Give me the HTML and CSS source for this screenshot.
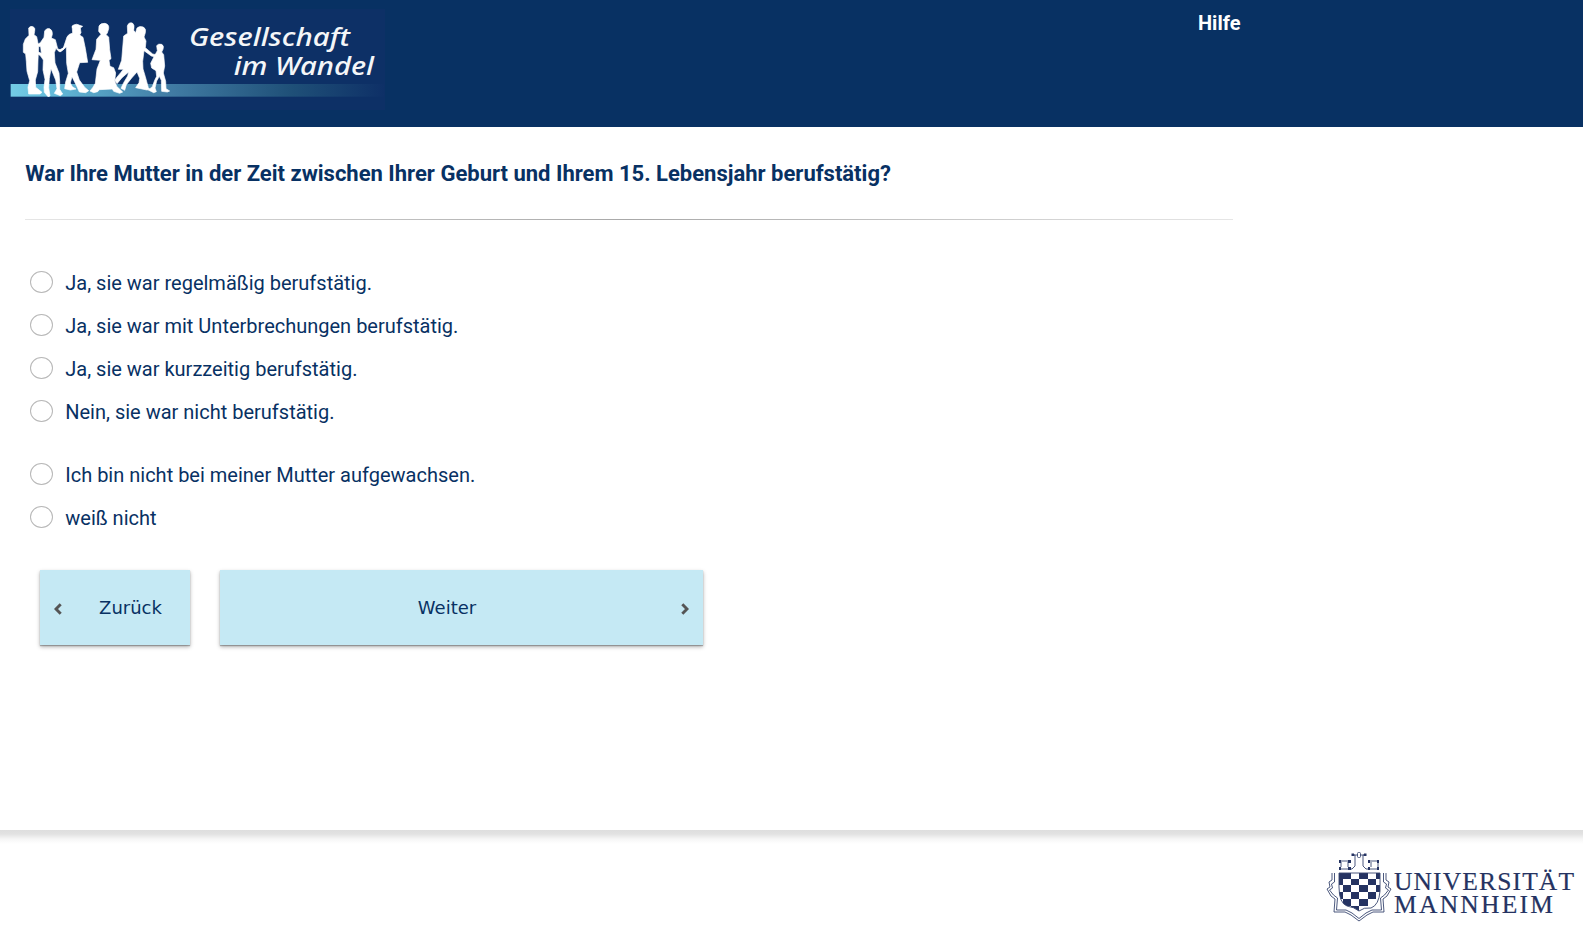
FILE: index.html
```html
<!DOCTYPE html>
<html lang="de">
<head>
<meta charset="utf-8">
<title>Gesellschaft im Wandel</title>
<link rel="stylesheet" href="styles.css">
</head>
<body>
<header class="header">
  <svg class="brand" viewBox="0 0 1200 381" role="img" aria-label="Gesellschaft im Wandel">
    <defs>
      <linearGradient id="band" x1="0" x2="1">
        <stop offset="0" stop-color="#74cce6"/>
        <stop offset=".12" stop-color="#62b8d8"/>
        <stop offset=".42" stop-color="#427da5"/>
        <stop offset=".75" stop-color="#1f5078"/>
        <stop offset="1" stop-color="#0e3067"/>
      </linearGradient>
    </defs>
    <rect x="30" y="27" width="1125" height="303" fill="#0d3066"/>
    <rect x="32" y="252" width="1120" height="38" fill="url(#band)"/>
    <g class="figures">
      <path d="M86 84Q91 77 99 80Q107 83 104 94L102 104L110 110L116 140L114 180L113 215L106 240L107 262L126 277L120 282L86 282L84 262L89 242L81 214L79 185L77 162L70 157V133L76 117L87 106Z"/>
      <path d="M132 112L134 93Q139 83 149 86Q158 90 157 103L154 114L166 119L173 146L181 150L192 142L192 147L180 156L172 150L168 145L163 158L165 189L177 219L179 244L179 268L188 282L181 287L163 280L171 266L167 240L153 206L148 235L146 263L150 288L144 290L133 277L132 262L135 238L129 210L130 180L122 168L111 160L113 155L124 160L122 140L112 138L113 133L121 128Z"/>
      <path d="M190 144L201 111Q205 102 218 99L217 86Q213 77 221 75Q230 70 239 76L248 79L241 84L243 98L239 105L249 112L256 145L263 187L239 188L230 216L238 240L254 262L266 272L257 278L238 276L231 260L216 230L211 249L217 260L228 267L211 270L194 266L197 246L205 220L200 190L199 141L183 154L174 152Z"/>
      <path d="M297 78Q301 69 315 70Q328 73 326 86L322 99L318 104L326 111L329 149L333 176L327 181L330 199L341 203L347 219L344 242L350 259L368 276L359 280L341 274L337 267L298 269L293 275L281 278L270 273L278 263L286 250L291 207L301 181L276 179L288 148L290 118L303 103L296 94Z"/>
      <path d="M382 78Q386 66 397 69Q405 74 401 91L407 98L411 84Q419 77 430 81Q439 86 436 98L432 111L438 123L436 143L458 162L468 164L466 171L454 168L432 152L428 184L429 207L436 230L445 263L450 268L441 270L407 263L417 248L419 235L411 216L395 234L379 254L374 271L363 265L371 248L383 228L386 216L366 233L351 251L344 240L362 218L370 208L355 208L365 181L371 108L383 100Z"/>
      <path d="M472 152L470 137Q475 130 485 133Q493 137 489 148L485 156L491 164L494 198L490 219L497 244L498 266L509 273L502 276L485 274L484 241L478 229L470 243L465 264L469 275L461 278L445 270L457 260L464 241L470 229L468 212L455 204L452 190L460 174Z"/>
    </g>
    <g class="brand-text">
      <text x="567" y="139" textLength="483" lengthAdjust="spacingAndGlyphs">Gesellschaft</text>
      <text x="701" y="226" textLength="421" lengthAdjust="spacingAndGlyphs">im Wandel</text>
    </g>
  </svg>
  <a class="help">Hilfe</a>
</header>
<main class="content">
  <h1 class="question">War Ihre Mutter in der Zeit zwischen Ihrer Geburt und Ihrem 15. Lebensjahr berufstätig?</h1>
  <div class="rule"></div>
  <form class="answers">
    <label class="answer"><input type="radio" name="a">Ja, sie war regelmäßig berufstätig.</label>
    <label class="answer"><input type="radio" name="a">Ja, sie war mit Unterbrechungen berufstätig.</label>
    <label class="answer"><input type="radio" name="a">Ja, sie war kurzzeitig berufstätig.</label>
    <label class="answer"><input type="radio" name="a">Nein, sie war nicht berufstätig.</label>
    <label class="answer separated"><input type="radio" name="a">Ich bin nicht bei meiner Mutter aufgewachsen.</label>
    <label class="answer"><input type="radio" name="a">weiß nicht</label>
  </form>
  <nav class="buttons">
    <button class="button back"><svg class="chevron" viewBox="0 0 8 12"><path d="M6.7 1.2L2 6L6.7 10.8"/></svg><span>Zurück</span></button>
    <button class="button next"><span>Weiter</span><svg class="chevron" viewBox="0 0 8 12"><path d="M1.3 1.2L6 6L1.3 10.8"/></svg></button>
  </nav>
</main>
<footer class="footer">
  <svg class="university" viewBox="0 0 273 98" role="img" aria-label="Universität Mannheim">
    <defs>
      <clipPath id="shield"><path d="M29 43H70V61Q69 75 61 78Q54 77 49 81Q44 77 37 76Q29 73 29 57Z"/></clipPath>
    </defs>
    <g clip-path="url(#shield)">
      <path fill="#253362" d="M29 43H31V49H29ZM31 43H41V49H31ZM49 43H58V49H49ZM41 49H49V55H41ZM58 49H66V55H58ZM33 55H41V62H33ZM49 55H58V62H49ZM66 55H70V62H66ZM41 62H49V69H41ZM58 62H66V69H58ZM33 69H41V76H33ZM49 69H58V76H49ZM66 43H70V49H66ZM41 76H49V83H41ZM29 62H33V69H29ZM29 49H33V55H29Z"/>
    </g>
    <g fill="none" stroke="#38466f" stroke-width=".9">
      <path d="M29 43H70V61Q69 75 61 78Q54 77 49 81Q44 77 37 76Q29 73 29 57Z"/>
      <path d="M22 43V50L19 52L20 57L17 59L21 66L25 69L24 82H35L41 85L49 91L57 85L63 82H74L73 69L77 66L81 59L78 57L79 52L76 50V43"/>
      <path d="M24.5 43V52L21.5 54L22.5 58L19.5 60L23.5 65L27.5 68L26.5 80H36L42 83L49 88.5L56 83L62 80H71.5L70.5 68L74.5 65L78.5 60L75.5 58L76.5 54L73.5 52V43"/>
      <path d="M29 39H42L45 36V25H42M56 25H53V36L56 39H69M29 31H40M59 31H69M31 32V37M38 32V37M61 32V37M68 32V37M44 25H54"/>
      <rect x="47.5" y="22.5" width="3" height="5" rx="1" fill="#fff"/>
    </g>
    <path d="M29 30H31V33H29ZM38 30H41V33H38ZM58 30H60V33H58ZM67 30H69V33H67ZM29 37H31V40H29ZM38 37H41V40H38ZM58 37H60V40H58ZM67 37H69V40H67ZM41.5 23.5H44V26H41.5ZM54 23.5H56.5V26H54Z" fill="#253362"/>
    <g class="university-text">
      <text x="84" y="60" textLength="180">UNIVERSITÄT</text>
      <text x="84" y="83" textLength="159">MANNHEIM</text>
    </g>
  </svg>
</footer>
</body>
</html>
```
FILE: styles.css
```css
* { box-sizing: border-box; }
body {
  margin: 0;
  height: 928px;
  display: flex;
  flex-direction: column;
  overflow: hidden;
  background: #fff;
  color: #083163;
  font-family: Roboto, sans-serif;
}
.header {
  flex: none;
  height: 127px;
  display: flex;
  background: #083163;
}
.brand { display: block; width: 400px; height: 127px; }
.figures { fill: #fff; stroke: #fff; stroke-width: 2; stroke-linejoin: round; }
.brand-text {
  fill: #f4f6f8;
  font: italic 500 78px "Noto Sans", sans-serif;
}
.help {
  margin: 11px 0 0 798px;
  font-size: 20px;
  line-height: 24px;
  font-weight: 700;
  color: #fff;
}
.content { flex: 1; padding-left: 25px; }
.question {
  margin: 33px 0 0;
  padding-left: .25px;
  font-size: 22px;
  line-height: 28px;
  font-weight: 700;
  white-space: nowrap;
}
.rule {
  width: 1208px;
  height: 1px;
  margin-top: 31px;
  background: linear-gradient(90deg, #e6e6e6, #a8a8a8 50%, #e6e6e6);
}
.answers {
  display: flex;
  flex-direction: column;
  align-items: flex-start;
  margin-top: 41px;
}
.answer {
  display: flex;
  align-items: center;
  height: 43px;
  padding-left: 5px;
  gap: 12.25px;
  font-size: 20px;
  white-space: nowrap;
}
.answer input {
  appearance: none;
  width: 23px;
  height: 22px;
  margin: 0 0 1px;
  border: 1px solid #b8b8b8;
  border-radius: 50%;
  background: #fff;
}
.separated { margin-top: 20px; }
.buttons {
  display: flex;
  gap: 30px;
  margin: 31px 0 0 15px;
}
.button {
  display: flex;
  align-items: center;
  height: 75px;
  padding: 0 14px;
  border: 0;
  border-radius: 0;
  background: #c5e9f4;
  box-shadow: 0 2px 4px rgba(0, 0, 0, .3), 0 1px 1px rgba(0, 0, 0, .25);
  color: #083163;
  font: 18px "DejaVu Sans", Verdana, sans-serif;
}
.button span { flex: 1; text-align: center; }
.back { width: 150px; }
.back span { padding-left: 23px; }
.next { width: 483px; }
.next span { padding-right: 21px; }
.chevron {
  width: 8px;
  height: 12px;
  margin-top: 2px;
  fill: none;
  stroke: #555;
  stroke-width: 2.9;
}
.footer {
  flex: none;
  height: 98px;
  display: flex;
  justify-content: flex-end;
  background: linear-gradient(#dedede, #e2e2e2 4px, #f6f6f6 9px, #fff 14px);
}
.university { display: block; width: 273px; height: 98px; }
.university-text {
  fill: #253362;
  stroke: #253362;
  stroke-width: .2;
  font: 25.5px "Liberation Serif", serif;
}
```
